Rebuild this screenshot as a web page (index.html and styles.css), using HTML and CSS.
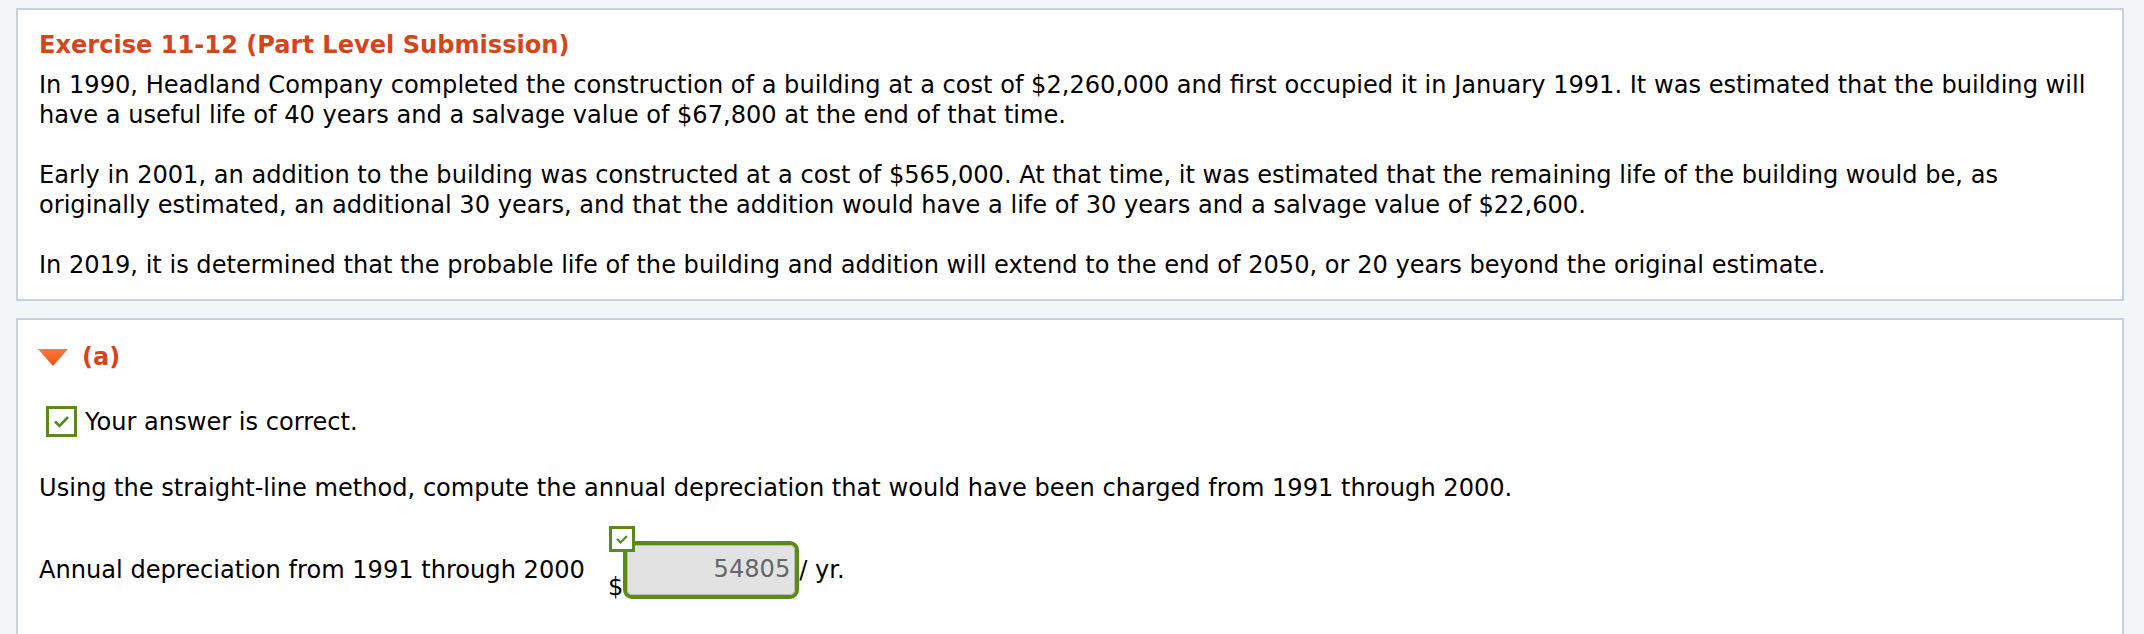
FILE: index.html
```html
<!DOCTYPE html>
<html>
<head>
<meta charset="utf-8">
<link rel="stylesheet" href="styles.css">
</head>
<body>
<div class="page">
  <section class="card intro">
    <h1 class="title">Exercise 11-12 (Part Level Submission)</h1>
    <p>In 1990, Headland Company completed the construction of a building at a cost of $2,260,000 and first occupied it in January 1991. It was estimated that the building will have a useful life of 40 years and a salvage value of $67,800 at the end of that time.</p>
    <p>Early in 2001, an addition to the building was constructed at a cost of $565,000. At that time, it was estimated that the remaining life of the building would be, as originally estimated, an additional 30 years, and that the addition would have a life of 30 years and a salvage value of $22,600.</p>
    <p>In 2019, it is determined that the probable life of the building and addition will extend to the end of 2050, or 20 years beyond the original estimate.</p>
  </section>
  <section class="card part">
    <div class="part-head">
      <svg class="caret" width="30" height="17" viewBox="0 0 30 17">
        <defs>
          <linearGradient id="cg" x1="0" y1="0" x2="0" y2="1">
            <stop offset="0" stop-color="#ff7a3c"/>
            <stop offset="1" stop-color="#f04e14"/>
          </linearGradient>
        </defs>
        <polygon points="0,0 30,0 15,17" fill="url(#cg)"/>
      </svg>
      <span class="part-label">(a)</span>
    </div>
    <div class="status">
      <span class="check-box">
        <svg width="25" height="25" viewBox="0 0 25 25"><polyline points="6,12.5 10.5,17 19,8" fill="none" stroke="#4f8a1e" stroke-width="2.6"/></svg>
      </span>
      <span>Your answer is correct.</span>
    </div>
    <p class="question">Using the straight-line method, compute the annual depreciation that would have been charged from 1991 through 2000.</p>
    <div class="answer-row">
      <span class="answer-label">Annual depreciation from 1991 through 2000</span>
      <span class="dollar">$</span>
      <span class="field">
        <span class="mini-check">
          <svg width="20" height="20" viewBox="0 0 20 20"><polyline points="5,10 8.5,13.5 15,7" fill="none" stroke="#4f8a1e" stroke-width="2.2"/></svg>
        </span>
        <span class="field-inner">54805</span>
      </span>
      <span class="unit">/ yr.</span>
    </div>
  </section>
</div>
</body>
</html>
```
FILE: styles.css
```css
html, body {
  margin: 0;
  padding: 0;
  background: #f3f6f9;
}
body {
  font-family: "DejaVu Sans", "Liberation Sans", sans-serif;
  font-size: 24.1px;
  line-height: 30px;
  color: #000;
  overflow: hidden;
}
.page {
  padding: 8px 20px 0 16px;
  display: flex;
  flex-direction: column;
  gap: 17px;
}
.card {
  background: #fff;
  border: 2px solid #c9d1dc;
}
.intro {
  padding: 20px 14px 19px 21px;
}
.title {
  margin: 0 0 10px;
  font-size: 24.1px;
  line-height: 30px;
  font-weight: bold;
  color: #d2461e;
}
.intro p {
  margin: 0 0 30px;
}
.intro p:last-child {
  margin-bottom: 0;
}
.part {
  padding: 22px 20px 60px 20px;
  border-bottom: none;
}
.part-head {
  display: flex;
  align-items: center;
  gap: 14px;
  height: 30px;
}
.part-label {
  font-weight: bold;
  color: #d2461e;
}
.status {
  margin: 34px 0 0 8px;
  display: flex;
  align-items: center;
  gap: 8px;
}
.check-box {
  width: 25px;
  height: 25px;
  border: 3px solid #5a8a1e;
  background: #fff;
  display: flex;
}
.question {
  margin: 36px 0 0 1px;
}
.answer-row {
  margin-top: 38px;
  display: flex;
  align-items: center;
  padding-left: 1px;
}
.answer-label {
  margin-right: 23px;
}
.dollar {
  align-self: flex-end;
  line-height: 24px;
}
.field {
  position: relative;
  width: 168px;
  height: 50px;
  border: 4px solid #5a8a18;
  border-radius: 9px;
  display: flex;
}
.field-inner {
  flex: 1;
  background: #e2e2e2;
  border: 1px solid #b9b9b9;
  border-radius: 5px;
  color: #666;
  text-align: right;
  padding-right: 4px;
  line-height: 46px;
}
.mini-check {
  position: absolute;
  left: -18px;
  top: -19px;
  width: 20px;
  height: 20px;
  border: 3px solid #5a8a1e;
  background: #fff;
  display: flex;
}
.unit {
  margin-left: 0;
}
```
